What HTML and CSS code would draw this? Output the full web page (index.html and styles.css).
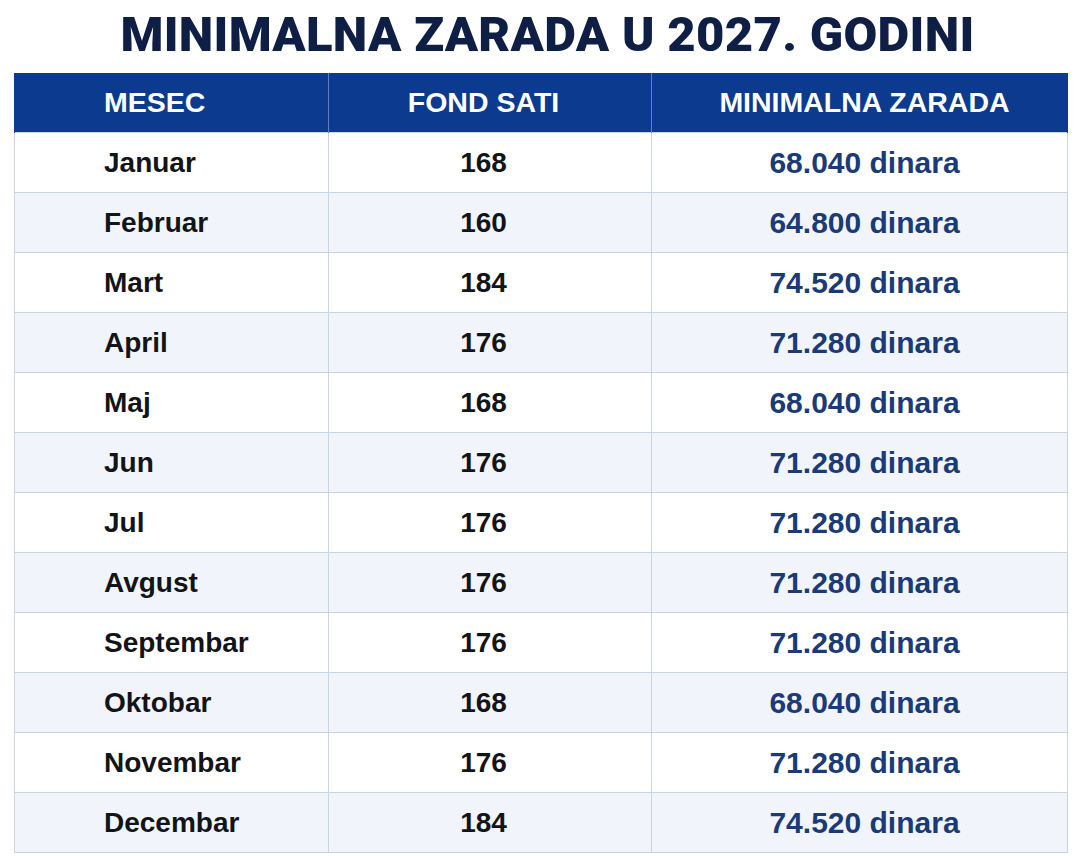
FILE: index.html
```html
<!DOCTYPE html>
<html lang="sr">
<head>
<meta charset="utf-8">
<title>Minimalna zarada u 2027. godini</title>
<link rel="stylesheet" href="styles.css">
</head>
<body>
<div class="page">
  <h1 class="title">MINIMALNA ZARADA U 2027. GODINI</h1>
  <table class="wage-table">
    <colgroup>
      <col class="c-month">
      <col class="c-hours">
      <col class="c-wage">
    </colgroup>
    <thead>
      <tr>
        <th class="left">MESEC</th>
        <th class="hours">FOND SATI</th>
        <th class="wage">MINIMALNA ZARADA</th>
      </tr>
    </thead>
    <tbody>
      <tr><td class="left">Januar</td><td class="hours">168</td><td class="wage">68.040 dinara</td></tr>
      <tr><td class="left">Februar</td><td class="hours">160</td><td class="wage">64.800 dinara</td></tr>
      <tr><td class="left">Mart</td><td class="hours">184</td><td class="wage">74.520 dinara</td></tr>
      <tr><td class="left">April</td><td class="hours">176</td><td class="wage">71.280 dinara</td></tr>
      <tr><td class="left">Maj</td><td class="hours">168</td><td class="wage">68.040 dinara</td></tr>
      <tr><td class="left">Jun</td><td class="hours">176</td><td class="wage">71.280 dinara</td></tr>
      <tr><td class="left">Jul</td><td class="hours">176</td><td class="wage">71.280 dinara</td></tr>
      <tr><td class="left">Avgust</td><td class="hours">176</td><td class="wage">71.280 dinara</td></tr>
      <tr><td class="left">Septembar</td><td class="hours">176</td><td class="wage">71.280 dinara</td></tr>
      <tr><td class="left">Oktobar</td><td class="hours">168</td><td class="wage">68.040 dinara</td></tr>
      <tr><td class="left">Novembar</td><td class="hours">176</td><td class="wage">71.280 dinara</td></tr>
      <tr><td class="left">Decembar</td><td class="hours">184</td><td class="wage">74.520 dinara</td></tr>
    </tbody>
  </table>
</div>
</body>
</html>
```
FILE: styles.css
```css
html, body {
  margin: 0;
  padding: 0;
  background: #ffffff;
}
body {
  font-family: "Liberation Sans", Arial, sans-serif;
}
.page {
  width: 1080px;
  padding: 0 13px 0 14px;
  box-sizing: border-box;
}
.title {
  margin: 0;
  height: 73px;
  line-height: 70px;
  padding-left: 14px;
  text-align: center;
  font-family: Roboto, "Liberation Sans", Arial, sans-serif;
  font-size: 49px;
  font-weight: 900;
  color: #0e1e45;
  letter-spacing: 0.3px;
}
.wage-table {
  width: 1053px;
  border-collapse: collapse;
  table-layout: fixed;
}
.c-month { width: 314px; }
.c-hours { width: 323px; }
.c-wage { width: 416px; }
.wage-table th {
  height: 59px;
  padding: 0;
  background: #0b3a8e;
  color: #ffffff;
  font-size: 28.5px;
  font-weight: 700;
  text-align: center;
  border-left: 1px solid #5f7fb8;
  border-right: 1px solid #5f7fb8;
}
.wage-table th:first-child { border-left-color: #0b3a8e; }
.wage-table th:last-child { border-right-color: #0b3a8e; }
.wage-table td {
  height: 59px;
  padding: 0;
  font-size: 28px;
  font-weight: 700;
  color: #131418;
  text-align: center;
  border: 1px solid #c9d4e4;
}
.wage-table .left {
  text-align: left;
  padding-left: 89px;
}
.wage-table .hours {
  padding-right: 13px;
}
.wage-table .wage {
  padding-left: 10px;
}
.wage-table tbody tr:nth-child(even) td {
  background: #f1f5fb;
}
.wage-table td.wage {
  color: #1a3b78;
  font-size: 30px;
}
```
